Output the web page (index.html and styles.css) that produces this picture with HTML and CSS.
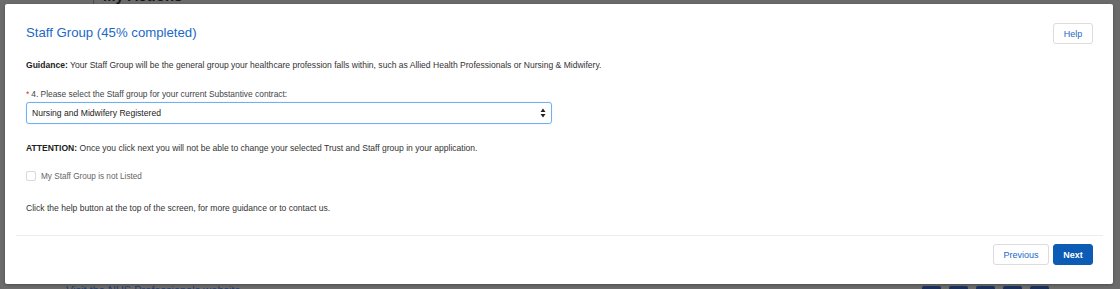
FILE: index.html
```html
<!DOCTYPE html>
<html>
<head>
<meta charset="utf-8">
<link rel="stylesheet" href="styles.css">
</head>
<body>
<div class="page">
  <div class="top-strip">
    <div class="top-rule"></div>
    <div class="bg-heading">My Actions</div>
  </div>
  <div class="middle">
    <div class="modal">
      <div class="modal-head">
        <h1 class="title">Staff Group (45% completed)</h1>
        <button class="btn btn-light">Help</button>
      </div>
      <div class="modal-body">
        <p class="text"><b>Guidance:</b> Your Staff Group will be the general group your healthcare profession falls within, such as Allied Health Professionals or Nursing &amp; Midwifery.</p>
        <div class="field">
          <label class="label"><span class="req">*</span>4. Please select the Staff group for your current Substantive contract:</label>
          <div class="select">
            <span>Nursing and Midwifery Registered</span>
            <svg class="arrows" width="6" height="10" viewBox="0 0 6 10"><path d="M3 0.5 L5.5 4 L0.5 4 Z M3 9.5 L5.5 6 L0.5 6 Z" fill="#222"/></svg>
          </div>
        </div>
        <p class="text attn"><b>ATTENTION:</b> Once you click next you will not be able to change your selected Trust and Staff group in your application.</p>
        <div class="check-row">
          <span class="checkbox"></span>
          <span class="check-label">My Staff Group is not Listed</span>
        </div>
        <p class="text help-text">Click the help button at the top of the screen, for more guidance or to contact us.</p>
      </div>
      <div class="modal-foot">
        <button class="btn btn-light">Previous</button>
        <button class="btn btn-primary">Next</button>
      </div>
    </div>
  </div>
  <div class="bottom-strip">
    <div class="bg-link">Visit the NHS Professionals website</div>
    <div class="squares">
      <span class="sq"></span><span class="sq"></span><span class="sq"></span><span class="sq"></span><span class="sq"></span>
    </div>
  </div>
</div>
</body>
</html>
```
FILE: styles.css
```css
* { box-sizing: border-box; }
html, body { margin: 0; padding: 0; }
body {
  width: 1120px;
  height: 289px;
  overflow: hidden;
  background: #6b6b6b;
  font-family: "Liberation Sans", Arial, sans-serif;
}
.page {
  display: flex;
  flex-direction: column;
  height: 289px;
}
.top-strip {
  height: 4px;
  overflow: hidden;
  display: flex;
  padding-left: 93px;
}
.top-rule {
  width: 1px;
  background: #4a4a4a;
  height: 4px;
}
.bg-heading {
  margin-left: 9px;
  margin-top: -12px;
  font-size: 15px;
  font-weight: bold;
  color: #151515;
  line-height: 16px;
}
.middle {
  padding: 0 7px 0 5px;
}
.modal {
  background: #fff;
  height: 280px;
  border-radius: 2px;
  box-shadow: 0 1px 3px rgba(0,0,0,0.3);
  display: flex;
  flex-direction: column;
  padding: 0 10px 0 11px;
}
.modal-head {
  display: flex;
  justify-content: space-between;
  align-items: flex-start;
  padding: 18px 10px 0 10px;
  height: 46px;
}
.title {
  margin: 0;
  font-weight: normal;
  font-size: 13.2px;
  color: #1b6ac6;
  line-height: 22px;
}
.btn {
  font-family: "Liberation Sans", Arial, sans-serif;
  font-size: 9px;
  height: 21px;
  border-radius: 3px;
  padding: 0 10px;
  cursor: pointer;
}
.modal-head .btn { margin-top: 1px; width: 40px; padding: 0; }
.btn-light {
  background: #fff;
  border: 1px solid #dcdcdc;
  color: #1b6ac6;
}
.btn-primary {
  background: #0c5cb6;
  border: 1px solid #0c5cb6;
  color: #fff;
  font-weight: bold;
  width: 40px;
  padding: 0;
}
.modal-body {
  padding: 0 10px;
  flex: 1;
}
.text {
  margin: 0;
  font-size: 8.55px;
  color: #333;
  line-height: 12px;
}
.text b { color: #222; }
.modal-body > .text:first-child { margin-top: 9px; }
.field { margin-top: 18px; }
.label {
  display: block;
  font-size: 8.4px;
  color: #444;
  line-height: 10px;
}
.req { color: #c23934; margin-right: 2px; }
.select {
  margin-top: 3px;
  width: 526px;
  height: 22px;
  border: 1px solid #6fb0f2;
  border-radius: 3px;
  box-shadow: 0 0 1px #9ccaf6;
  display: flex;
  align-items: center;
  justify-content: space-between;
  padding: 0 5px 0 5px;
  font-size: 8.6px;
  color: #222;
}
.attn { margin-top: 18px; }
.check-row {
  margin-top: 17px;
  display: flex;
  align-items: center;
  gap: 5px;
}
.checkbox {
  width: 10px;
  height: 10px;
  border: 1px solid #d8d8d8;
  border-radius: 2px;
  background: #fff;
}
.check-label {
  font-size: 8.2px;
  color: #666;
}
.help-text { margin-top: 21px; }
.modal-foot {
  border-top: 1px solid #ececec;
  height: 49px;
  display: flex;
  justify-content: flex-end;
  align-items: flex-start;
  gap: 4px;
  padding: 8px 10px 0 0;
}
.modal-foot .btn-light { width: 56px; padding: 0; }
.bottom-strip {
  height: 5px;
  overflow: hidden;
  display: flex;
}
.bg-link {
  margin-left: 66px;
  font-size: 11px;
  color: #1f3c6e;
  line-height: 12px;
}
.squares {
  margin-left: auto;
  margin-right: 71px;
  display: flex;
  gap: 8px;
  margin-top: 2px;
}
.sq {
  width: 19px;
  height: 19px;
  background: #19305a;
  border-radius: 2px;
}
```
